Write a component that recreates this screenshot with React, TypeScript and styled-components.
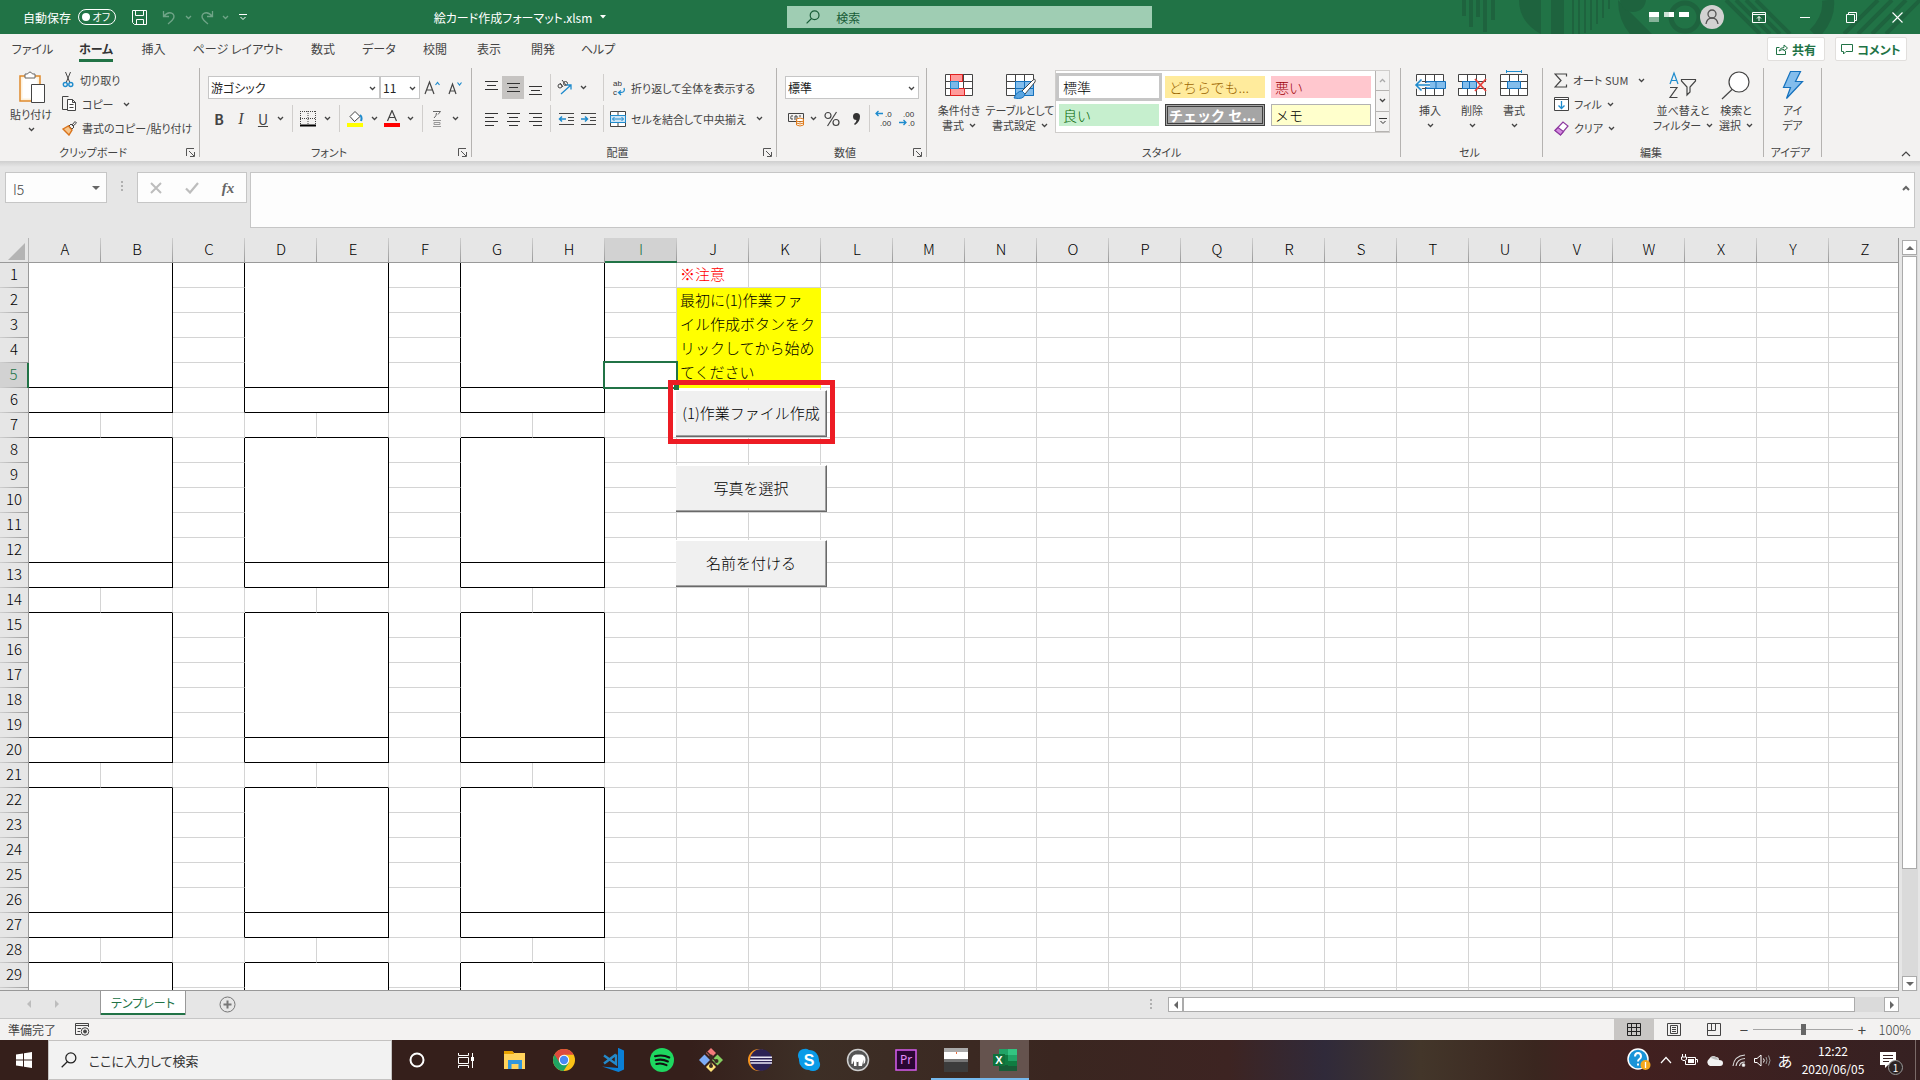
import React from "react";
import styled, { createGlobalStyle, css } from "styled-components";

const green = "#217346";
const ink = "#444444";
const line = "#d4d4d4";
const blue = "#1e8bcd";

const GlobalStyle = createGlobalStyle`
  *, *::before, *::after { box-sizing: border-box; }
  body { margin: 0; background: #e6e6e6; }
  body, button, input, select, textarea {
    font-family: "Noto Sans CJK JP", "Noto Sans", sans-serif;
    font-size: 12px;
    font-weight: 400;
    font-feature-settings: "palt";
    color: ${ink};
  }
  button { border: 0; padding: 0; background: none; }
  svg { display: block; flex: none; }
`;

const Window = styled.div`
  display: flex;
  flex-direction: column;
  height: 100vh;
  overflow: hidden;
`;

/* ---------- Title bar ---------- */

const TitleBar = styled.header`
  position: relative;
  display: grid;
  grid-template-columns: 41fr 19fr 40fr;
  align-items: center;
  height: 34px;
  flex: none;
  background: ${green};
  color: #fff;
`;

const Decoration = styled.svg`
  position: absolute;
  top: 0;
  right: 0;
`;

const QuickAccess = styled.div`
  display: flex;
  align-items: center;
  padding-left: 23px;
`;

const AutoSave = styled.button`
  display: flex;
  align-items: center;
  gap: 7px;
  width: 96px;
  color: #fff;
  white-space: nowrap;
`;

const Toggle = styled.span`
  display: flex;
  align-items: center;
  justify-content: space-between;
  width: 38px;
  height: 16px;
  padding: 0 5px 0 3px;
  border: 1px solid #fff;
  border-radius: 8px;
  font-size: 10px;
  line-height: 14px;
  &::before {
    content: "";
    width: 8px;
    height: 8px;
    border-radius: 50%;
    background: #fff;
  }
`;

const FlatButton = styled.button<{ $w: number; $dim?: boolean }>`
  display: flex;
  align-items: center;
  justify-content: center;
  gap: 8px;
  flex: none;
  width: ${(p) => p.$w}px;
  height: 24px;
  color: inherit;
  opacity: ${(p) => (p.$dim ? 0.35 : 1)};
`;

const FileName = styled.h1`
  display: flex;
  align-items: center;
  justify-content: center;
  gap: 8px;
  flex: 1;
  margin: 0;
  font-size: 12px;
  font-weight: 400;
  white-space: nowrap;
`;

const TitleSearch = styled.label`
  display: flex;
  align-items: center;
  gap: 16px;
  height: 22px;
  padding-left: 19px;
  background: #9fcdb3;
  color: #185c37;
  z-index: 1;
  input {
    flex: 1;
    min-width: 0;
    border: 0;
    padding: 0;
    background: none;
    color: #185c37;
    outline: 0;
  }
  input::placeholder { color: #185c37; opacity: 1; }
`;

const WindowTools = styled.div`
  display: flex;
  align-items: center;
  justify-content: flex-end;
  z-index: 1;
`;

const Avatar = styled.button`
  display: flex;
  align-items: center;
  justify-content: center;
  width: 24px;
  height: 24px;
  margin: 0 12px 0 10px;
  border-radius: 50%;
  background: #d2d2d2;
`;

/* ---------- Ribbon ---------- */

const TabRow = styled.nav`
  display: flex;
  align-items: stretch;
  height: 30px;
  flex: none;
  background: #f3f2f1;
`;

const Tab = styled.button<{ $w: number; $active?: boolean }>`
  display: flex;
  justify-content: center;
  width: ${(p) => p.$w}px;
  font-size: 12px;
  line-height: 30px;
  white-space: nowrap;
  ${(p) =>
    p.$active &&
    css`
      font-weight: 700;
      color: #333;
      span { border-bottom: 3px solid ${green}; height: 28px; line-height: 30px; }
    `}
`;

const ShareArea = styled.div`
  display: flex;
  gap: 10px;
  margin-left: auto;
  padding: 3px 13px 3px 0;
`;

const ShareButton = styled.button<{ $w: number }>`
  display: flex;
  align-items: center;
  justify-content: center;
  gap: 4px;
  width: ${(p) => p.$w}px;
  height: 24px;
  border: 1px solid #e1dfdd;
  border-radius: 2px;
  background: #fff;
  color: ${green};
  font-weight: 700;
  white-space: nowrap;
`;

const Ribbon = styled.div`
  display: flex;
  align-items: flex-start;
  height: 97px;
  flex: none;
  padding-top: 4px;
  background: #f3f2f1;
`;

const Group = styled.section<{ $w: number }>`
  display: flex;
  flex-direction: column;
  width: ${(p) => p.$w}px;
  height: 89px;
  flex: none;
  border-right: 1px solid #b5b3b1;
`;

const GroupBody = styled.div<{ $pad?: number }>`
  display: flex;
  height: 74px;
  flex: none;
  padding-left: ${(p) => p.$pad ?? 0}px;
`;

const GroupFoot = styled.div`
  display: flex;
  align-items: center;
  height: 20px;
  flex: none;
  padding-right: 4px;
  font-size: 11px;
  span { flex: 1; text-align: center; }
`;

const Column = styled.div<{ $top?: number; $left?: number }>`
  display: flex;
  flex-direction: column;
  padding: ${(p) => p.$top ?? 0}px 0 0 ${(p) => p.$left ?? 0}px;
`;

const Line = styled.div`
  display: flex;
  align-items: center;
  height: 31px;
  white-space: nowrap;
`;

const BigButton = styled.button<{ $w: number }>`
  display: flex;
  flex-direction: column;
  align-items: center;
  width: ${(p) => p.$w}px;
  padding-top: 2px;
  font-size: 11px;
  line-height: 15px;
  white-space: nowrap;
  svg { margin-bottom: 3px; }
  span { display: flex; align-items: center; gap: 5px; height: 15px; }
  span svg { margin: 0; }
`;

const TextButton = styled.button<{ $w?: number }>`
  display: flex;
  align-items: center;
  gap: 5px;
  width: ${(p) => (p.$w ? p.$w + "px" : "auto")};
  height: 24px;
  font-size: 11px;
  white-space: nowrap;
`;

const Icon = styled.button<{ $w: number; $on?: boolean }>`
  display: flex;
  align-items: center;
  justify-content: center;
  width: ${(p) => p.$w}px;
  height: 23px;
  background: ${(p) => (p.$on ? "#c6c4c2" : "none")};
  font-size: 14px;
  b { font-weight: 700; }
  i { font-family: "Liberation Serif", serif; font-size: 16px; }
`;

const Spacer = styled.span<{ $w: number }>`
  width: ${(p) => p.$w}px;
`;

const Rule = styled.span`
  width: 1px;
  height: 27px;
  background: #d0cecc;
`;

const SelectBox = styled.span<{ $w: number }>`
  position: relative;
  display: block;
  width: ${(p) => p.$w}px;
  height: 23px;
  select {
    appearance: none;
    width: 100%;
    height: 23px;
    padding: 0 16px 0 2px;
    border: 1px solid #c6c6c6;
    border-radius: 0;
    background: #fff;
    color: #222;
  }
  svg { position: absolute; right: 4px; top: 10px; }
`;

const Gallery = styled.div`
  display: flex;
  width: 335px;
  height: 63px;
  border: 1px solid #cfcdcb;
  background: #fff;
`;

const Styles = styled.div`
  display: grid;
  grid-template-columns: repeat(3, 100px);
  grid-auto-rows: 22px;
  gap: 6px;
  flex: 1;
  padding: 5px 3px;
`;

const StyleCell = styled.button<{ $bg: string; $fg: string; $ring?: string; $bold?: boolean }>`
  padding: 0 4px;
  background: ${(p) => p.$bg};
  color: ${(p) => p.$fg};
  box-shadow: ${(p) => p.$ring ?? "none"};
  font-size: 14px;
  font-weight: ${(p) => (p.$bold ? 700 : 300)};
  line-height: 20px;
  text-align: left;
  white-space: nowrap;
  font-feature-settings: normal;
`;

const GallerySteps = styled.div`
  display: grid;
  grid-template-rows: repeat(3, 1fr);
  width: 14px;
  button {
    display: flex;
    align-items: center;
    justify-content: center;
    border-left: 1px solid #b5b3b1;
    border-bottom: 1px solid #b5b3b1;
    background: #f3f2f1;
  }
`;

const Collapse = styled.button`
  align-self: flex-end;
  margin: 0 9px 4px auto;
`;

/* ---------- Formula bar ---------- */

const FormulaBar = styled.div`
  display: flex;
  align-items: flex-start;
  height: 77px;
  flex: none;
  padding: 11px 5px 0;
  background: linear-gradient(#cfcfcf, #e6e6e6 6px);
`;

const NameBox = styled.label`
  display: flex;
  align-items: center;
  width: 102px;
  height: 31px;
  padding: 0 6px 0 7px;
  border: 1px solid #c6c6c6;
  background: #fdfdfd;
  input {
    flex: 1;
    min-width: 0;
    height: 29px;
    border: 0;
    padding: 2px 0 0;
    background: none;
    font-size: 14px;
    font-weight: 300;
    outline: 0;
  }
`;

const Grip = styled.i`
  width: 2px;
  height: 11px;
  margin: 9px 14px 0;
  background: repeating-linear-gradient(#b0b0b0 0 2px, transparent 2px 4px);
`;

const EntryButtons = styled.div`
  display: flex;
  align-items: center;
  width: 110px;
  height: 31px;
  margin-right: 3px;
  border: 1px solid #c6c6c6;
  background: #fdfdfd;
  button { flex: 1; display: flex; justify-content: center; }
`;

const Fx = styled.span`
  font-family: "Liberation Serif", serif;
  font-size: 15px;
  font-style: italic;
  font-weight: 700;
  line-height: 20px;
  color: #666;
`;

const FormulaInput = styled.div`
  display: flex;
  flex: 1;
  height: 56px;
  border: 1px solid #c6c6c6;
  background: #fdfdfd;
  textarea { flex: 1; border: 0; resize: none; background: none; outline: 0; }
  button { align-self: flex-start; margin: 12px 4px 0 0; }
`;

/* ---------- Sheet ---------- */

const SheetArea = styled.main`
  display: flex;
  flex: 1;
  min-height: 0;
`;

const Sheet = styled.div`
  position: relative;
  flex: 1;
  min-width: 0;
  overflow: hidden;
  border-right: 1px solid #999;
  border-bottom: 1px solid #999;
  background: #fff;
`;

const Grid = styled.table`
  table-layout: fixed;
  border-collapse: separate;
  border-spacing: 0;
  width: 1901px;
  font-size: 15px;
  font-weight: 300;
  font-feature-settings: normal;
  color: #000;
  tr { height: 25px; }
  th, td { height: 25px; padding: 0; line-height: 22px; vertical-align: top; white-space: nowrap; }
`;

const Corner = styled.th`
  border-right: 1px solid #b5b5b5;
  border-bottom: 1px solid #999;
  background: #e6e6e6;
  svg { margin: 5px 0 0 8px; }
`;

const ColHead = styled.th<{ $on: boolean }>`
  font-weight: 300;
  background: linear-gradient(#cfcfcf, #999) right / 1px 100% no-repeat ${(p) => (p.$on ? "#d2d2d2" : "#e6e6e6")};
  border-bottom: ${(p) => (p.$on ? `2px solid ${green}` : "1px solid #999")};
  color: ${(p) => (p.$on ? green : "#000")};
`;

const RowHead = styled.th<{ $on: boolean }>`
  font-weight: 300;
  background: linear-gradient(90deg, #cfcfcf, #999) bottom / 100% 1px no-repeat ${(p) => (p.$on ? "#d2d2d2" : "#e6e6e6")};
  border-right: ${(p) => (p.$on ? `2px solid ${green}` : "1px solid #999")};
  color: ${(p) => (p.$on ? green : "#000")};
`;

const Cell = styled.td<{ $right?: boolean; $bottom?: boolean }>`
  position: relative;
  border-right: 1px solid ${(p) => (p.$right ? "#000" : line)};
  border-bottom: 1px solid ${(p) => (p.$bottom ? "#000" : line)};
`;

const WarningCell = styled(Cell)`
  && { padding-left: 3px; }
  color: #f00;
`;

const NoteCell = styled.td`
  && { padding-left: 3px; line-height: 24px; }
  background: #ff0;
`;

const Selection = styled.div`
  position: absolute;
  inset: -2px;
  border: 2px solid ${green};
  z-index: 1;
  &::after {
    content: "";
    position: absolute;
    right: -3px;
    bottom: -3px;
    width: 5px;
    height: 5px;
    background: ${green};
  }
`;

const MacroButton = styled.button<{ $top: number }>`
  position: absolute;
  left: 676px;
  top: ${(p) => p.$top}px;
  width: 151px;
  height: 47px;
  padding-bottom: 3px;
  border-style: solid;
  border-width: 1px 1px 1px 0;
  border-color: #fff #696969 #696969 #fff;
  background: #f0f0f0;
  box-shadow: inset -1px -1px #a0a0a0;
  color: #000;
  font-size: 15px;
  font-weight: 300;
  font-feature-settings: normal;
  white-space: nowrap;
`;

const Highlight = styled.div`
  position: absolute;
  left: 668px;
  top: 142px;
  width: 167px;
  height: 64px;
  border: 5px solid #ed1c24;
  z-index: 2;
  pointer-events: none;
`;

const VScroll = styled.div`
  display: flex;
  flex-direction: column;
  width: 16px;
  margin: 2px 2px 0 3px;
  background: #dadada;
`;

const ScrollButton = styled.button`
  display: flex;
  align-items: center;
  justify-content: center;
  width: 15px;
  height: 15px;
  flex: none;
  border: 1px solid #ababab;
  background: #fff;
`;

const VThumb = styled.div`
  flex: 613;
  margin: 1px 1px 0 0;
  border: 1px solid #ababab;
  background: #fff;
`;

const VTrack = styled.div`
  flex: 107;
`;

/* ---------- Sheet tabs ---------- */

const SheetBar = styled.div`
  display: flex;
  align-items: flex-start;
  height: 28px;
  flex: none;
  border-bottom: 1px solid #c6c6c6;
  background: #e6e6e6;
`;

const SheetNav = styled.div`
  display: flex;
  gap: 20px;
  width: 100px;
  padding: 9px 0 0 25px;
`;

const SheetTab = styled.button`
  width: 86px;
  height: 24px;
  border: solid #999;
  border-width: 0 1px;
  box-shadow: inset 0 -2px ${green};
  background: #fff;
  color: ${green};
  font-size: 12px;
  line-height: 22px;
`;

const AddSheet = styled.button`
  margin: 5px 0 0 33px;
`;

const HScroll = styled.div`
  display: flex;
  align-items: center;
  width: 39%;
  height: 15px;
  margin: 6px 21px 0 auto;
`;

const HTrack = styled.div`
  flex: 1;
  height: 15px;
  padding-right: 29px;
  background: #dadada;
`;

const HThumb = styled.div`
  height: 15px;
  border: 1px solid #ababab;
  background: #fff;
`;

const ScrollGrip = styled(Grip)`
  margin: 0 16px 0 0;
`;

/* ---------- Status bar ---------- */

const StatusBar = styled.footer`
  display: flex;
  align-items: center;
  height: 21px;
  flex: none;
  padding-left: 8px;
  background: #f3f2f1;
`;

const StatusIcon = styled.span`
  margin-left: 19px;
`;

const ViewButtons = styled.div`
  display: flex;
  margin-left: auto;
`;

const ViewButton = styled.button<{ $on?: boolean }>`
  display: flex;
  align-items: center;
  justify-content: center;
  width: 40px;
  height: 21px;
  background: ${(p) => (p.$on ? "#c8c6c4" : "none")};
`;

const Zoom = styled.div`
  display: flex;
  align-items: center;
  gap: 4px;
  padding: 0 9px 0 5px;
  button { width: 10px; font-size: 15px; line-height: 20px; }
  span { width: 40px; text-align: right; font-size: 13px; font-weight: 300; }
  input {
    appearance: none;
    width: 100px;
    height: 11px;
    margin: 0;
    background: linear-gradient(#a6a6a6, #a6a6a6) center / 100% 1px no-repeat;
  }
  input::-webkit-slider-thumb {
    appearance: none;
    width: 5px;
    height: 11px;
    background: #666;
  }
`;

/* ---------- Taskbar ---------- */

const Taskbar = styled.footer`
  display: flex;
  align-items: stretch;
  height: 40px;
  flex: none;
  background: linear-gradient(90deg, #351f1b 36%, #3d2f26 42%, #3a2620 55%, #3d2422 64%, #302a3a 69%, #43362a 74%, #3a261f 80%, #43201f 83%, #362122 100%);
  color: #fff;
`;

const StartButton = styled.button`
  display: flex;
  align-items: center;
  justify-content: center;
  width: 48px;
`;

const TaskSearch = styled.label`
  display: flex;
  align-items: center;
  gap: 12px;
  width: 344px;
  padding-left: 12px;
  border: 1px solid #c4c2c1;
  background: #f2f2f2;
  input { flex: 1; min-width: 0; border: 0; padding: 0; background: none; font-size: 13px; outline: 0; }
  input::placeholder { color: #333; opacity: 1; }
`;

const TaskButton = styled.button<{ $state?: "open" | "active" }>`
  display: flex;
  align-items: center;
  justify-content: center;
  width: 49px;
  background: ${(p) => (p.$state === "active" ? "#65534e" : "none")};
  ${(p) =>
    p.$state &&
    css`
      box-shadow: inset 0 -2px #76b9ed;
    `}
`;

const Tray = styled.div`
  display: flex;
  align-items: center;
  margin-left: auto;
`;

const TrayItem = styled.button<{ $w: number }>`
  display: flex;
  align-items: center;
  justify-content: center;
  width: ${(p) => p.$w}px;
  height: 40px;
  color: #fff;
  font-size: 15px;
`;

const Clock = styled.time`
  width: 72px;
  font-size: 12px;
  line-height: 18px;
  text-align: center;
`;

const Notice = styled.span`
  position: relative;
  margin-right: 8px;
  b {
    position: absolute;
    left: 8px;
    top: 8px;
    width: 15px;
    height: 15px;
    border: 1px solid #999;
    border-radius: 50%;
    background: #2d2424;
    font-size: 10px;
    font-weight: 400;
    line-height: 13px;
  }
`;

const ShowDesktop = styled.button`
  width: 5px;
  height: 40px;
  border-left: 1px solid #7a6a68;
`;

/* ---------- Icons ---------- */

type SvgProps = { w: number; h: number; children: React.ReactNode; sw?: number; c?: string };
const S = ({ w, h, children, sw = 1, c = "currentColor" }: SvgProps) => (
  <svg width={w} height={h} viewBox={`0 0 ${w} ${h}`} fill="none" stroke={c} strokeWidth={sw} aria-hidden="true">
    {children}
  </svg>
);

const Glyph = ({ x, y, children }: { x: number; y: number; children: string }) => (
  <text x={x} y={y} fontSize="8" fontFamily="Liberation Sans, sans-serif" fill="#333" stroke="none">
    {children}
  </text>
);

const Chevron = ({ up = false, c = "#444" }) => (
  <S w={7} h={5} c={c} sw={1.3}>
    <path d={up ? "M1 4L3.500 1.500L6 4" : "M1 1L3.500 3.500L6 1"} />
  </S>
);

const Triangle = ({ dir, c = "#666" }: { dir: "up" | "down" | "left" | "right"; c?: string }) => {
  const d = { up: "M0 6L4 2L8 6Z", down: "M0 2L4 6L8 2Z", left: "M6 0L2 4L6 8Z", right: "M2 0L6 4L2 8Z" }[dir];
  return (
    <S w={8} h={8} c="none">
      <path d={d} fill={c} />
    </S>
  );
};

const Launcher = () => (
  <S w={9} h={9} c="#555">
    <path d="M.5 8V.5H8M3 3L8 8M8.500 4V8.500H4" />
  </S>
);

const Magnifier = ({ s = 14, c = "currentColor", sw = 1.2 }) => (
  <svg width={s} height={s} viewBox="0 0 14 14" fill="none" stroke={c} strokeWidth={sw} aria-hidden="true">
    <circle cx="8.600" cy="5.200" r="4.400" />
    <path d="M5.500 8.500L.6 13.400" />
  </svg>
);

const TextLines = ({ rows, y }: { rows: number[][]; y: number }) => (
  <S w={15} h={16} c="#333" sw={1}>
    {rows.map(([a, b], i) => (
      <path key={i} d={`M${a} ${y + i * 4}.5H${b}`} />
    ))}
  </S>
);

const TableIcon = ({ children }: { children?: React.ReactNode }) => (
  <S w={32} h={30} c="#444">
    <path d="M2.500 4.500H29.500V25.500H2.500ZM2.500 11.500H29.500M2.500 18.500H29.500M11.500 4.500V25.500M20.500 4.500V25.500" fill="#fff" />
    {children}
  </S>
);

const apps: { name: string; state?: "open" | "active"; icon: React.ReactNode }[] = [
  { name: "Cortana", icon: <S w={16} h={16} c="#fff" sw={2}><circle cx="8" cy="8" r="6.500" /></S> },
  {
    name: "タスク ビュー",
    icon: <S w={17} h={17} c="#fff"><path d="M1.500 1V3.500H11.500V1M1.500 5.500H11.500V11.500H1.500ZM1.500 16V13.500H11.500V16M15.500 1V16" /><path d="M15.500 5V9" strokeWidth="3" /></S>,
  },
  {
    name: "エクスプローラー",
    icon: <S w={24} h={22} c="none"><path d="M1 2H9L11 4H22V20H1Z" fill="#ffd35c" /><path d="M1 2H9L11 4V5H1Z" fill="#e8a200" /><path d="M5 20V11H19V20H15.500V15H8.500V20Z" fill="#2f96dc" /></S>,
  },
  {
    name: "Chrome",
    icon: <S w={24} h={24} c="none"><circle cx="12" cy="12" r="11" fill="#fbc116" /><path d="M12 12L2.500 6.500A11 11 0 0 0 11.500 23L16.800 14.800Z" fill="#1fa463" /><path d="M12 6.800H21.700A11 11 0 0 0 2.500 6.500L7.500 14.600Z" fill="#dd4b3e" /><circle cx="12" cy="12" r="5.200" fill="#fff" /><circle cx="12" cy="12" r="4.200" fill="#4a8af4" /></S>,
  },
  {
    name: "Visual Studio Code",
    icon: <S w={24} h={24} c="none"><path d="M17.500 0L23 2.500V21.500L17.500 24L1 18.500L17 20V0Z" fill="#0a7fd6" /><path d="M15 6.500V16L3 7.500M3 15.500L15 6.500" stroke="#2489ca" strokeWidth="2.400" /></S>,
  },
  {
    name: "Spotify",
    icon: <S w={24} h={24} c="none"><circle cx="12" cy="12" r="12" fill="#1ed760" /><path d="M5 8.300Q12.500 6 19.300 9.500M5.700 12.300Q12 10.500 17.900 13.500M6.300 16Q11.500 14.600 16.500 17.200" stroke="#111" strokeWidth="2" strokeLinecap="round" /></S>,
  },
  {
    name: "Git",
    icon: <S w={24} h={24} c="none"><path d="M12 0L17 5L12 10L7 5Z" fill="#f47b7b" /><path d="M5.500 6.500L11 12L5.500 17.500L0 12Z" fill="#7dacf7" /><path d="M18.500 6.500L24 12L18.500 17.500L13 12Z" fill="#84cf60" /><path d="M12 14L17 19L12 24L7 19Z" fill="#ffe27a" /><path d="M8 4L12 8V19M12 9L17.500 13.500" stroke="#3b2b23" strokeWidth="1.600" /><g fill="#3b2b23"><circle cx="12" cy="8.500" r="2" /><circle cx="12" cy="18" r="2" /><circle cx="17.500" cy="13" r="2" /></g></S>,
  },
  {
    name: "Eclipse",
    icon: <S w={24} h={24} c="none"><circle cx="11" cy="12" r="11" fill="#f7941e" /><circle cx="13" cy="12" r="11" fill="#2c2255" /><path d="M2.500 9.300H24M2 12.200H24M2.500 15.100H24" stroke="#e9e6f5" strokeWidth="1.500" /></S>,
  },
  {
    name: "Skype",
    icon: <S w={24} h={24} c="none"><path d="M7 1A6 6 0 0 1 12 2A10 10 0 0 1 22 13A6.500 6.500 0 0 1 16 23A6 6 0 0 1 12 22A10 10 0 0 1 2 11A6.500 6.500 0 0 1 7 1Z" fill="#0a9be8" /><text x="12" y="18" textAnchor="middle" fill="#fff" fontFamily="Liberation Sans, sans-serif" fontWeight="700" fontSize="16">S</text></S>,
  },
  {
    name: "pgAdmin",
    icon: <S w={24} h={24} c="none"><circle cx="12" cy="12" r="10.500" fill="#555" stroke="#cfcfcf" strokeWidth="1.500" /><path d="M5.500 16Q4.500 7.500 9.500 6.500H14Q19.500 6.500 19.500 12Q19.500 15 17.500 16V11.500L16 18H12.500V13.500Q11.500 14.500 10.500 13.500V18H8V12.500L6.500 16Z" fill="#fff" /></S>,
  },
  {
    name: "Premiere Pro",
    icon: <S w={23} h={22} c="none"><rect x="1" y="1" width="20" height="20" fill="#2a0634" stroke="#d65cf0" strokeWidth="1.500" /><text x="11" y="15" textAnchor="middle" fill="#e28cf7" fontFamily="Noto Sans, sans-serif" fontSize="12">Pr</text></S>,
  },
  {
    name: "スキャナー",
    state: "open",
    icon: <S w={24} h={24} c="none"><rect width="24" height="11" fill="#fff" /><rect width="24" height="4" fill="#aaa" /><rect x="12" y="4" width="1" height="2" fill="#f26b3a" /><rect y="11" width="24" height="3" fill="#777" /><rect y="14" width="24" height="10" fill="#3c3c3c" /></S>,
  },
  {
    name: "Excel",
    state: "active",
    icon: <S w={24} h={22} c="none"><rect x="6" y="0" width="18" height="22" fill="#185c37" /><rect x="6" y="0" width="9" height="6" fill="#21a366" /><rect x="15" y="0" width="9" height="6" fill="#33c481" /><rect x="6" y="6" width="9" height="10" fill="#107c41" /><rect x="15" y="6" width="9" height="6" fill="#21a366" /><rect x="15" y="12" width="9" height="5" fill="#107c41" /><rect x="0" y="5" width="12" height="12" fill="#10713b" /><text x="6" y="15" textAnchor="middle" fill="#fff" fontFamily="Liberation Sans, sans-serif" fontWeight="700" fontSize="11">X</text></S>,
  },
];

/* ---------- Data ---------- */

const tabs: [string, number][] = [
  ["ファイル", 65], ["ホーム", 62], ["挿入", 53], ["ページ レイアウト", 116], ["数式", 54],
  ["データ", 58], ["校閲", 54], ["表示", 54], ["開発", 54], ["ヘルプ", 56],
];

const columns = "ABCDEFGHIJKLMNOPQRSTUVWXYZ".split("");
const rowCount = 30;
const rows = Array.from({ length: rowCount }, (_, i) => i + 1);
const cardStarts = [0, 3, 6];
const cardCols = [0, 1, 3, 4, 6, 7];

/* Cards repeat every seven rows: five for the picture, one for the name, one left free. */
function renderCell(row: number, col: number) {
  const phase = (row - 1) % 7;
  if (cardCols.includes(col)) {
    if (phase === 6) return <Cell key={col} $bottom />;
    if (!cardStarts.includes(col)) return null;
    if (phase === 5) return <Cell key={col} colSpan={2} $right $bottom />;
    if (phase === 0) return <Cell key={col} colSpan={2} rowSpan={Math.min(5, rowCount - row + 1)} $right $bottom />;
    return null;
  }
  if (col === 9 && row === 1) return <WarningCell key={col}>※注意</WarningCell>;
  if (row >= 2 && row <= 5 && (col === 9 || col === 10)) {
    if (row !== 2 || col !== 9) return null;
    return (
      <NoteCell key={col} colSpan={2} rowSpan={4}>
        最初に(1)作業ファ<br />イル作成ボタンをク<br />リックしてから始め<br />てください
      </NoteCell>
    );
  }
  return (
    <Cell key={col} $right={(col === 2 || col === 5) && phase !== 6}>
      {row === 5 && col === 8 && <Selection />}
    </Cell>
  );
}

/* ---------- Sections ---------- */

const Header = () => (
  <TitleBar>
    <Decoration width="480" height="34" viewBox="0 0 480 34" fill="none" stroke="#1e633e" aria-hidden="true">
      <path d="M24 0V16M31 0V27M38 0V17M45 0V32M53 0V20" strokeWidth="4" />
      <path d="M79 0H101V34Q79 22 79 0ZM111 0H124V34H111Z" fill="#1e633e" stroke="none" />
      <path d="M133 0V34M139 0V34M145 0V33M151 0V30M157 0V24M163 0V18M169 0V9" strokeWidth="2" />
      <path d="M178 0L212 34H190Q178 20 178 0Z" fill="#1e633e" stroke="none" />
      <circle cx="193" cy="-1" r="13" fill="#1e633e" stroke="none" />
      <circle cx="245" cy="17" r="14" strokeWidth="5" />
      <path d="M286 0L320 34M296 0L330 34M306 0L340 34M316 0L350 34" strokeWidth="4" />
      <path d="M388 0Q390 18 374 34" strokeWidth="12" />
      <path d="M404 34L438 0M418 34L452 0M432 34L466 0M446 34L480 0" strokeWidth="4" />
    </Decoration>
    <QuickAccess>
      <AutoSave type="button">自動保存<Toggle>オフ</Toggle></AutoSave>
      <FlatButton type="button" $w={40} aria-label="上書き保存">
        <S w={17} h={17} c="#fff"><path d="M1.500 1.500H15.500V15.500H3.500L1.500 13.500ZM4.500 1.500V6.500H12.500V1.500M5.500 15.500V10.500H12.500V15.500" /></S>
      </FlatButton>
      <FlatButton type="button" $w={36} $dim aria-label="元に戻す">
        <S w={15} h={15} c="#fff" sw={1.3}><path d="M1.500 1V6.500H7M1.500 6.500Q6 1 10.500 3.500Q15 7.500 6 14" /></S><Chevron c="#fff" />
      </FlatButton>
      <FlatButton type="button" $w={38} $dim aria-label="やり直し">
        <S w={15} h={15} c="#fff" sw={1.3}><path d="M13.500 1V6.500H8M13.500 6.500Q9 1 4.500 3.500Q0 7.500 9 14" /></S><Chevron c="#fff" />
      </FlatButton>
      <FlatButton type="button" $w={20} aria-label="クイック アクセスのカスタマイズ">
        <S w={8} h={8} c="#fff"><path d="M0 1.500H8M1.500 4L4 6.500L6.500 4" /></S>
      </FlatButton>
      <FileName>絵カード作成フォーマット.xlsm <S w={6} h={4} c="none"><path d="M0 0H6L3 3.500Z" fill="#fff" /></S></FileName>
    </QuickAccess>
    <TitleSearch>
      <Magnifier />
      <input type="text" placeholder="検索" aria-label="検索" />
    </TitleSearch>
    <WindowTools>
      <S w={41} h={11} c="none"><path d="M0 0H10V5H0ZM20 0H25V5H20ZM30 0H40V5H30Z" fill="#fff" /><path d="M0 5H10V10H0Z" fill="#86b39a" /><path d="M15 0H20V5H15Z" fill="#cfe2d7" /></S>
      <Avatar type="button" aria-label="アカウント">
        <S w={14} h={16} c="#555" sw={1.3}><circle cx="7" cy="5" r="4" /><path d="M1 15Q2 9 7 9T13 15" /></S>
      </Avatar>
      <FlatButton type="button" $w={46} aria-label="リボンの表示オプション">
        <S w={14} h={11} c="#fff"><path d="M.5.500H13.500V10.500H.5ZM.5 2.500H13.500M7 9V4.500M5 6.500L7 4.500L9 6.500" /></S>
      </FlatButton>
      <FlatButton type="button" $w={46} aria-label="最小化"><S w={10} h={3} c="#fff"><path d="M0 1.500H10" /></S></FlatButton>
      <FlatButton type="button" $w={46} aria-label="元に戻す (縮小)">
        <S w={11} h={11} c="#fff"><path d="M.5 2.500H8.500V10.500H.5ZM2.500 2.500V.5H10.500V8.500H8.500" /></S>
      </FlatButton>
      <FlatButton type="button" $w={46} aria-label="閉じる"><S w={11} h={11} c="#fff" sw={1.1}><path d="M.5.500L10.500 10.500M10.500.500L.5 10.500" /></S></FlatButton>
    </WindowTools>
  </TitleBar>
);

const RibbonTabs = () => (
  <TabRow>
    {tabs.map(([name, w]) => (
      <Tab key={name} type="button" $w={w} $active={name === "ホーム"}><span>{name}</span></Tab>
    ))}
    <ShareArea>
      <ShareButton type="button" $w={58}>
        <S w={12} h={12} c={green}><path d="M3.500 4.500H.5V11.500H9.500V8M3 8Q4 4.500 8 4.500V2L11.500 5L8 8V6.500Q5 6.500 3 8" /></S>共有
      </ShareButton>
      <ShareButton type="button" $w={72}>
        <S w={12} h={11} c={green}><path d="M.5.500H11.500V7.500H5L2.500 10V7.500H.5Z" /></S>コメント
      </ShareButton>
    </ShareArea>
  </TabRow>
);

const RibbonPanel = () => (
  <Ribbon>
    <Group $w={200}>
      <GroupBody>
        <BigButton type="button" $w={62}>
          <S w={30} h={34} c="#e08a2c" sw={1.500}><path d="M4 6H24V31H4Z" fill="#fdf1dc" /><path d="M6.500 8.500H21.500V28.500H6.500Z" fill="#fff" stroke="none" /><path d="M9 8V4H11.500Q14 0 16.500 4H19V8Z" fill="#fff" stroke="#666" strokeWidth="1" /><path d="M15.500 14.500H28.500V32.500H15.500Z" fill="#fff" stroke="#444" strokeWidth="1" /></S>
          <span>貼り付け</span>
          <span><Chevron /></span>
        </BigButton>
        <Column>
          <TextButton type="button">
            <S w={13} h={16} c="#444"><path d="M3.500 0L8 11M8.500 0L4 11" /><g stroke={blue} strokeWidth="1.400"><circle cx="3.300" cy="12.500" r="2" /><circle cx="8.800" cy="12.500" r="2" /></g></S>切り取り
          </TextButton>
          <TextButton type="button">
            <S w={15} h={16} c="#444"><path d="M5 13.500H.5V.5H6.500" /><path d="M5.500 3.500H10.500L13.500 6.500V14.500H5.500ZM10.500 3.500V6.500H13.500M7.500 8.500H11.500M7.500 11.500H11.500" fill="#fff" /></S>コピー&nbsp;&nbsp;<Chevron />
          </TextButton>
          <TextButton type="button">
            <S w={15} h={15} c="#444"><path d="M7 5L9 3L12 6L10 8ZM10 4L13 .5L14.500 2L11 5" /><path d="M1 8L6.500 5L10 9L7 14Z" fill="#f7c58b" stroke="#d9731b" strokeWidth="1.400" /></S>書式のコピー/貼り付け
          </TextButton>
        </Column>
      </GroupBody>
      <GroupFoot><span>クリップボード</span><Launcher /></GroupFoot>
    </Group>

    <Group $w={272}>
      <GroupBody $pad={8}>
        <Column $top={4}>
          <Line>
            <SelectBox $w={172}><select aria-label="フォント"><option>游ゴシック</option></select><Chevron /></SelectBox>
            <SelectBox $w={40}><select aria-label="フォント サイズ"><option>11</option></select><Chevron /></SelectBox>
            <Icon type="button" $w={24} aria-label="フォント サイズの拡大"><S w={17} h={16} c="#444" sw={1.200}><path d="M1 14L5.500 2L10 14M2.500 10H8.500" /><path d="M11.500 5L13.500 2.500L15.500 5" stroke={blue} /></S></Icon>
            <Icon type="button" $w={22} aria-label="フォント サイズの縮小"><S w={15} h={16} c="#444" sw={1.200}><path d="M1 14L4.500 4L8 14M2.500 11H6.500" /><path d="M9.500 2.500L11.500 5L13.500 2.500" stroke={blue} /></S></Icon>
          </Line>
          <Line>
            <Icon type="button" $w={22}><b>B</b></Icon>
            <Icon type="button" $w={22}><i>I</i></Icon>
            <Icon type="button" $w={22}><u>U</u></Icon>
            <Icon type="button" $w={12} aria-label="下線の種類"><Chevron /></Icon>
            <Spacer $w={6} />
            <Rule />
            <Icon type="button" $w={30} aria-label="罫線"><S w={16} h={16} c="#444"><path d="M.5 0V14M15.500 0V14M0 .5H16M8 0V14M0 7.500H16" strokeDasharray="1 1" /><path d="M0 14.500H16" strokeWidth="2" stroke="#000" /></S></Icon>
            <Icon type="button" $w={8} aria-label="罫線の種類"><Chevron /></Icon>
            <Spacer $w={8} />
            <Rule />
            <Icon type="button" $w={30} aria-label="塗りつぶしの色"><S w={16} h={17} c="#444"><path d="M3 6.500L8 1.500L13 6.500L7.500 11.500Z" fill="#fff" /><path d="M13 5Q15.500 7 14 11" stroke={blue} strokeWidth="2" /><path d="M0 15H16" stroke="#ff0" strokeWidth="4" /></S></Icon>
            <Icon type="button" $w={8} aria-label="塗りつぶしの色の選択"><Chevron /></Icon>
            <Icon type="button" $w={28} aria-label="フォントの色"><S w={16} h={17} c="#444" sw={1.200}><path d="M3.500 11L8 .5L12.500 11M5 7.500H11" /><path d="M0 15H16" stroke="#f00" strokeWidth="4" /></S></Icon>
            <Icon type="button" $w={8} aria-label="フォントの色の選択"><Chevron /></Icon>
            <Spacer $w={8} />
            <Rule />
            <Icon type="button" $w={28} aria-label="ふりがな"><S w={10} h={17} c="#666"><path d="M1 1.500H8.500L6 4.500M4.500 3Q4.500 6 2 8" /><path d="M1 10.500H9M2 12.500H8V14.500H2ZM1 16.500H9" stroke="#999" /></S></Icon>
            <Icon type="button" $w={8} aria-label="ふりがなの設定"><Chevron /></Icon>
          </Line>
        </Column>
      </GroupBody>
      <GroupFoot><span>フォント</span><Launcher /></GroupFoot>
    </Group>

    <Group $w={305}>
      <GroupBody $pad={8}>
        <Column $top={4}>
          <Line>
            <Icon type="button" $w={22} aria-label="上揃え"><TextLines rows={[[1, 14], [3, 12], [1, 14]]} y={1} /></Icon>
            <Icon type="button" $w={22} $on aria-label="上下中央揃え"><TextLines rows={[[1, 14], [3, 12], [1, 14]]} y={3} /></Icon>
            <Icon type="button" $w={22} aria-label="下揃え"><TextLines rows={[[1, 14], [3, 12], [1, 14]]} y={6} /></Icon>
            <Spacer $w={4} />
            <Rule />
            <Icon type="button" $w={28} aria-label="方向"><S w={18} h={17} c="#444"><circle cx="4" cy="7" r="2" /><path d="M4 4L7 8M6 1L10 6" /><circle cx="9.500" cy="4.500" r="2" /><path d="M5 15L15 6M10.500 6H15V10.500" stroke={blue} strokeWidth="1.300" /></S></Icon>
            <Icon type="button" $w={8} aria-label="方向の選択"><Chevron /></Icon>
            <Spacer $w={16} />
            <Rule />
          </Line>
          <Line>
            <Icon type="button" $w={22} aria-label="左揃え"><TextLines rows={[[1, 14], [1, 10], [1, 14], [1, 10]]} y={2} /></Icon>
            <Icon type="button" $w={22} aria-label="中央揃え"><TextLines rows={[[1, 14], [3, 12], [1, 14], [3, 12]]} y={2} /></Icon>
            <Icon type="button" $w={22} aria-label="右揃え"><TextLines rows={[[1, 14], [5, 14], [1, 14], [5, 14]]} y={2} /></Icon>
            <Spacer $w={4} />
            <Rule />
            <Icon type="button" $w={30} aria-label="インデントを減らす"><S w={17} h={14} c="#444"><path d="M1 1.500H16M10 5.500H16M10 8.500H16M1 12.500H16" /><path d="M8 7H1.500M4 4.500L1.500 7L4 9.500" stroke={blue} strokeWidth="1.500" /></S></Icon>
            <Icon type="button" $w={15} aria-label="インデントを増やす"><S w={17} h={14} c="#444"><path d="M1 1.500H16M10 5.500H16M10 8.500H16M1 12.500H16" /><path d="M1 7H7.500M5 4.500L7.500 7L5 9.500" stroke={blue} strokeWidth="1.500" /></S></Icon>
            <Spacer $w={7} />
            <Rule />
          </Line>
        </Column>
        <Column $top={4}>
          <Line>
            <TextButton type="button">
              <S w={22} h={19} c="none"><Glyph x={9} y={8}>ab</Glyph><Glyph x={9} y={17}>c</Glyph><path d="M20 10Q22 15 15 14.500M17 12.500L14.500 14.500L17 17" stroke={blue} strokeWidth="1.300" /></S>折り返して全体を表示する
            </TextButton>
          </Line>
          <Line>
            <TextButton type="button">
              <S w={22} h={16} c="#444"><path d="M6.500.500H21.500V15.500H6.500ZM14 .5V4M14 12V15.500" fill="#fff" /><path d="M6.500 4.500H21.500V11.500H6.500Z" fill="#cfe6f7" stroke={blue} /><path d="M8.500 8H19.500M10.500 6L8.500 8L10.500 10M17.500 6L19.500 8L17.500 10" stroke={blue} /></S>セルを結合して中央揃え&nbsp;&nbsp;<Chevron />
            </TextButton>
          </Line>
        </Column>
      </GroupBody>
      <GroupFoot><span>配置</span><Launcher /></GroupFoot>
    </Group>

    <Group $w={150}>
      <GroupBody $pad={8}>
        <Column $top={4}>
          <Line><SelectBox $w={134}><select aria-label="表示形式"><option>標準</option></select><Chevron /></SelectBox></Line>
          <Line>
            <Icon type="button" $w={22} aria-label="通貨表示形式"><S w={17} h={16} c="#444"><path d="M.5 2.500H15.500V10.500H.5ZM5 5Q2 4 3 8H5M7 9V5H9V9M11 5H13" /><path d="M8.500 8Q12 6 15.500 8V14Q12 16 8.500 14ZM8.500 10Q12 12 15.500 10M8.500 12Q12 14 15.500 12" fill="#fff" stroke="#e07b1a" /></S></Icon>
            <Icon type="button" $w={12} aria-label="通貨の選択"><Chevron /></Icon>
            <Icon type="button" $w={26} aria-label="パーセント スタイル"><S w={16} h={16} c="#444" sw={1.200}><circle cx="4" cy="4.500" r="3" /><circle cx="12" cy="11.500" r="3" /><path d="M12.500 1L3.500 15" /></S></Icon>
            <Icon type="button" $w={22} aria-label="桁区切りスタイル"><S w={9} h={14} c="none"><path d="M1 4.500A3.500 3.500 0 1 1 8 4.500Q8 10 3 13L2 12Q4.500 10 4.500 8A3.500 3.500 0 0 1 1 4.500Z" fill="#333" /></S></Icon>
            <Spacer $w={2} />
            <Rule />
            <Icon type="button" $w={28} aria-label="小数点以下の表示桁数を増やす"><S w={18} h={19} c="none"><Glyph x={10} y={8}>.0</Glyph><Glyph x={5} y={17}>.00</Glyph><path d="M8 4.500H1M3.500 2L1 4.500L3.500 7" stroke={blue} strokeWidth="1.300" /></S></Icon>
            <Icon type="button" $w={18} aria-label="小数点以下の表示桁数を減らす"><S w={18} h={19} c="none"><Glyph x={5} y={8}>.00</Glyph><Glyph x={10} y={17}>.0</Glyph><path d="M1 13.500H8M5.500 11L8 13.500L5.500 16" stroke={blue} strokeWidth="1.300" /></S></Icon>
          </Line>
        </Column>
      </GroupBody>
      <GroupFoot><span>数値</span><Launcher /></GroupFoot>
    </Group>

    <Group $w={474}>
      <GroupBody $pad={2}>
        <BigButton type="button" $w={60}>
          <TableIcon><path d="M7.500 4.500H19.500V11.500H7.500ZM7.500 18.500H21.500V25.500H7.500Z" fill="#ff9a9a" stroke="#e02020" /><path d="M7.500 11.500H15.500V18.500H7.500Z" fill="#7db8e8" stroke={blue} /></TableIcon>
          <span>条件付き</span><span>書式 <Chevron /></span>
        </BigButton>
        <BigButton type="button" $w={62}>
          <TableIcon><path d="M11.500 11.500H29.500V25.500H11.500Z" fill="#83bdec" stroke="#1471bd" /><path d="M11.500 18.500H29.500M20.500 11.500V25.500" stroke="#1471bd" /><path d="M18 21L29 10Q32 8 31 12L21 24Z" fill="#fff" /><path d="M18 21Q13 21 10 28Q20 30 21 24Z" fill="#5aa5e0" stroke="#1471bd" /></TableIcon>
          <span>テーブルとして</span><span>書式設定 <Chevron /></span>
        </BigButton>
        <Column $top={2} $left={4}>
          <Gallery>
            <Styles>
              <StyleCell type="button" $bg="#fff" $fg="#000" $ring="0 0 0 3px #c6c6c6">標準</StyleCell>
              <StyleCell type="button" $bg="#ffeb9c" $fg="#9c6500">どちらでも...</StyleCell>
              <StyleCell type="button" $bg="#ffc7ce" $fg="#9c0006">悪い</StyleCell>
              <StyleCell type="button" $bg="#c6efce" $fg="#006100">良い</StyleCell>
              <StyleCell type="button" $bg="#a5a5a5" $fg="#fff" $bold $ring="inset 0 0 0 1px #3f3f3f, inset 0 0 0 2px #a5a5a5, inset 0 0 0 3px #3f3f3f">チェック セ...</StyleCell>
              <StyleCell type="button" $bg="#ffffcc" $fg="#000" $ring="inset 0 0 0 1px #b2b2b2">メモ</StyleCell>
            </Styles>
            <GallerySteps>
              <button type="button" aria-label="前のスタイル"><Chevron up c="#aaa" /></button>
              <button type="button" aria-label="次のスタイル"><Chevron /></button>
              <button type="button" aria-label="その他のスタイル"><S w={8} h={8} c="#333"><path d="M0 1.500H8M1.500 4L4 6.500L6.500 4" /></S></button>
            </GallerySteps>
          </Gallery>
        </Column>
      </GroupBody>
      <GroupFoot><span>スタイル</span></GroupFoot>
    </Group>

    <Group $w={142}>
      <GroupBody $pad={8}>
        <BigButton type="button" $w={42}>
          <TableIcon><path d="M12 11.500H31.500V18.500H12Z" fill="#83bdec" stroke="#1471bd" /><path d="M22 11.500V18.500" stroke="#1471bd" /><path d="M16 15H1M7 9.500L1.500 15L7 20.500" stroke="#f3f2f1" strokeWidth="4" /><path d="M16 15H2M7.500 9.500L2 15L7.500 20.500" stroke={blue} strokeWidth="1.600" /></TableIcon>
          <span>挿入</span><span><Chevron /></span>
        </BigButton>
        <BigButton type="button" $w={42}>
          <TableIcon><path d="M1 12H6V18H1ZM21 12H31V18H21Z" fill="#f3f2f1" stroke="none" /><path d="M6.500 11.500H20.500V18.500H6.500ZM13.500 11.500V18.500" fill="#83bdec" stroke="#1471bd" /><path d="M19 9L30 21M30 9L19 21" stroke="#e8413c" strokeWidth="1.800" /></TableIcon>
          <span>削除</span><span><Chevron /></span>
        </BigButton>
        <BigButton type="button" $w={42}>
          <TableIcon><path d="M9.500 11.500H22.500V18.500H9.500Z" fill="#83bdec" stroke="#1471bd" /><path d="M8.500 0V3M23.500 0V3M8.500 1.500H23.500" stroke={blue} /></TableIcon>
          <span>書式</span><span><Chevron /></span>
        </BigButton>
      </GroupBody>
      <GroupFoot><span>セル</span></GroupFoot>
    </Group>

    <Group $w={221}>
      <GroupBody $pad={11}>
        <Column>
          <TextButton type="button" $w={102}><S w={14} h={15} c="#444" sw={1.200}><path d="M12.500 3.500V1H1L7 7.500L1 14H12.500V11.500" /></S>オート SUM&nbsp;&nbsp;<Chevron /></TextButton>
          <TextButton type="button" $w={102}><S w={15} h={14} c="#444"><path d="M.5.500H14.500V13.500H.5ZM.5 2.500H14.500" fill="#fff" /><path d="M7.500 4V11.500M4.500 8.500L7.500 11.500L10.500 8.500" stroke={blue} strokeWidth="1.300" /></S>フィル<Chevron /></TextButton>
          <TextButton type="button" $w={102}><S w={15} h={15} c="#8e3aa0" sw={1.200}><path d="M1 9.500L9 1L14 5L6.500 14Z" fill="#fff" /><path d="M1 9.500L4 6.500L9.500 10.500L6.500 14Z" fill="#d58be0" /></S>クリア<Chevron /></TextButton>
        </Column>
        <BigButton type="button" $w={54}>
          <S w={32} h={30} c="#444" sw={1.200}><path d="M3 14L7 3L11 14M4.500 10.500H9.500" stroke={blue} /><path d="M3 17.500H10L3 27.500H10.500M14.500 9.500H28.500V11L23 17V22L20 25V17L14.500 11Z" /></S>
          <span>並べ替えと</span><span>フィルター <Chevron /></span>
        </BigButton>
        <BigButton type="button" $w={52}>
          <S w={32} h={30} c="#444" sw={1.200}><circle cx="19" cy="12" r="10" fill="#fff" /><path d="M12 19.500L2 29" /></S>
          <span>検索と</span><span>選択 <Chevron /></span>
        </BigButton>
      </GroupBody>
      <GroupFoot><span>編集</span></GroupFoot>
    </Group>

    <Group $w={58}>
      <GroupBody>
        <BigButton type="button" $w={58}>
          <S w={24} h={30} c="#1471bd" sw={1.200}><path d="M9.500 1.500H19.500L14.500 11.500H21.500L5.500 28.500L9.500 17.500H2.500Z" fill="#83bdec" /></S>
          <span>アイ</span><span>デア</span>
        </BigButton>
      </GroupBody>
      <GroupFoot><span>アイデア</span></GroupFoot>
    </Group>
    <Collapse type="button" aria-label="リボンを折りたたむ"><S w={10} h={6} c="#444" sw={1.200}><path d="M1 5L5 1L9 5" /></S></Collapse>
  </Ribbon>
);

const Formula = () => (
  <FormulaBar>
    <NameBox><input type="text" defaultValue="I5" aria-label="名前ボックス" /><Triangle dir="down" /></NameBox>
    <Grip />
    <EntryButtons>
      <button type="button" aria-label="キャンセル"><S w={12} h={12} c="#bdbdbd" sw={2}><path d="M1 1L11 11M11 1L1 11" /></S></button>
      <button type="button" aria-label="入力"><S w={14} h={12} c="#bdbdbd" sw={2.200}><path d="M1 6.500L5 10.500L13 1" /></S></button>
      <button type="button" aria-label="関数の挿入"><Fx>fx</Fx></button>
    </EntryButtons>
    <FormulaInput>
      <textarea aria-label="数式バー" />
      <button type="button" aria-label="数式バーの折りたたみ"><S w={8} h={6} c="#666" sw={2}><path d="M1 5L4 2L7 5" /></S></button>
    </FormulaInput>
  </FormulaBar>
);

const Worksheet = () => (
  <SheetArea>
    <Sheet>
      <Grid>
        <colgroup>
          <col style={{ width: 29 }} />
          {columns.map((c) => <col key={c} style={{ width: 72 }} />)}
        </colgroup>
        <thead>
          <tr>
            <Corner aria-label="すべて選択"><S w={17} h={17} c="none"><path d="M17 0V17H0Z" fill="#b4b4b4" /></S></Corner>
            {columns.map((c) => <ColHead key={c} scope="col" $on={c === "I"}>{c}</ColHead>)}
          </tr>
        </thead>
        <tbody>
          {rows.map((r) => (
            <tr key={r}>
              <RowHead scope="row" $on={r === 5}>{r < rowCount ? r : ""}</RowHead>
              {columns.map((_, c) => renderCell(r, c))}
            </tr>
          ))}
        </tbody>
      </Grid>
      <MacroButton type="button" $top={152}>(1)作業ファイル作成</MacroButton>
      <MacroButton type="button" $top={227}>写真を選択</MacroButton>
      <MacroButton type="button" $top={302}>名前を付ける</MacroButton>
      <Highlight />
    </Sheet>
    <VScroll>
      <ScrollButton type="button" aria-label="上へ"><Triangle dir="up" /></ScrollButton>
      <VThumb />
      <VTrack />
      <ScrollButton type="button" aria-label="下へ"><Triangle dir="down" /></ScrollButton>
    </VScroll>
  </SheetArea>
);

const Bottom = () => (
  <>
    <SheetBar>
      <SheetNav><Triangle dir="left" c="#bdbdbd" /><Triangle dir="right" c="#bdbdbd" /></SheetNav>
      <SheetTab type="button">テンプレート</SheetTab>
      <AddSheet type="button" aria-label="新しいシート">
        <S w={17} h={17} c="#777"><circle cx="8.500" cy="8.500" r="7.500" /><path d="M8.500 4.500V12.500M4.500 8.500H12.500" strokeWidth="2" /></S>
      </AddSheet>
      <HScroll>
        <ScrollGrip />
        <ScrollButton type="button" aria-label="左へ"><Triangle dir="left" /></ScrollButton>
        <HTrack><HThumb /></HTrack>
        <ScrollButton type="button" aria-label="右へ"><Triangle dir="right" /></ScrollButton>
      </HScroll>
    </SheetBar>
    <StatusBar>
      準備完了
      <StatusIcon><S w={15} h={13} c="#444"><path d="M6 11.500H.5V.5H13.500V4M.5 2.500H13.500M2.500 5.500H6M2.500 8.500H5" /><circle cx="10" cy="8.500" r="3.800" /><circle cx="10" cy="8.500" r="1.500" fill="#444" /></S></StatusIcon>
      <ViewButtons>
        <ViewButton type="button" $on aria-label="標準"><S w={14} h={13} c="#222"><path d="M.5.500H13.500V12.500H.5ZM.5 4.500H13.500M.5 8.500H13.500M4.500.500V12.500M9.500.500V12.500" /></S></ViewButton>
        <ViewButton type="button" aria-label="ページ レイアウト"><S w={14} h={13} c="#444"><path d="M.5.500H13.500V12.500H.5ZM3.500 2.500H10.500V10.500H3.500ZM5 4.500H9M5 6.500H9M5 8.500H9" /></S></ViewButton>
        <ViewButton type="button" aria-label="改ページ プレビュー"><S w={14} h={13} c="#444"><path d="M.5.500H13.500V12.500H.5ZM.5 7.500H8.500V.5M4.500.500V7.500" /></S></ViewButton>
      </ViewButtons>
      <Zoom>
        <button type="button" aria-label="縮小">−</button>
        <input type="range" min="0" max="100" defaultValue="50" aria-label="ズーム" />
        <button type="button" aria-label="拡大">+</button>
        <span>100%</span>
      </Zoom>
    </StatusBar>
    <Taskbar>
      <StartButton type="button" aria-label="スタート"><S w={16} h={16} c="none"><path d="M0 2.500L7 1.500V7.500H0ZM8 1.300L16 0V7.500H8ZM0 8.500H7V14.500L0 13.500ZM8 8.500H16V16L8 14.700Z" fill="#fff" /></S></StartButton>
      <TaskSearch><Magnifier s={16} c="#222" sw={1.100} /><input type="text" placeholder="ここに入力して検索" aria-label="ここに入力して検索" /></TaskSearch>
      {apps.map((a) => <TaskButton key={a.name} type="button" $state={a.state} aria-label={a.name}>{a.icon}</TaskButton>)}
      <Tray>
        <TrayItem type="button" $w={32} aria-label="ヘルプ"><S w={24} h={24} c="none"><circle cx="11" cy="11" r="10" fill="#1a94d8" stroke="#fff" strokeWidth="1.500" /><path d="M8 8.500Q8 5 11 5T14 8.500Q14 10 12.500 11T11 13.500M11 15.500V17.500" stroke="#fff" strokeWidth="2" /><circle cx="18.500" cy="17" r="5" fill="#f5a81c" /><path d="M18.500 14V20" stroke="#fff" strokeWidth="1.300" /></S></TrayItem>
        <TrayItem type="button" $w={22} aria-label="隠れているインジケーター"><S w={12} h={8} c="#fff" sw={1.200}><path d="M1 7L6 1.500L11 7" /></S></TrayItem>
        <TrayItem type="button" $w={24} aria-label="バッテリー"><S w={17} h={13} c="#fff"><path d="M6.500 3.500H14.500V10.500H4.500V7M14.500 5.500H16.500V8.500M.5 3V5.500Q3 8 5.500 5.500V3ZM1.500 0V3M4.500 0V3" /><path d="M7 5H13V9H7Z" fill="#fff" stroke="none" /></S></TrayItem>
        <TrayItem type="button" $w={26} aria-label="OneDrive"><S w={17} h={11} c="none"><path d="M4 11A4 4 0 0 1 3 4Q6-1 10 2Q13 2 13 5Q17 5 17 8T14 11Z" fill="#f2f2f2" /><path d="M5 3Q9 5 13 5L10 2Q6 0 5 3Z" fill="#bbb" /></S></TrayItem>
        <TrayItem type="button" $w={24} aria-label="Wi-Fi"><S w={14} h={13} c="#ddd" sw={1.100}><path d="M1 12Q2 2 13 1M4 12Q5 5 13 4.500M7.500 12Q8 8 13 8" /><circle cx="11.500" cy="11" r="1.300" fill="#fff" /></S></TrayItem>
        <TrayItem type="button" $w={22} aria-label="音量"><S w={17} h={13} c="#fff"><path d="M.5 4.500H3L7 1V12L3 8.500H.5ZM9.500 4.500Q11 6.500 9.500 8.500" /><path d="M12 3Q14 6.500 12 10M14.500 1.500Q17.500 6.500 14.500 11.500" stroke="#999" /></S></TrayItem>
        <TrayItem type="button" $w={24}>あ</TrayItem>
        <Clock>12:22<br />2020/06/05</Clock>
        <TrayItem type="button" $w={46} aria-label="通知">
          <Notice><S w={16} h={17} c="none"><path d="M0 0H16V13H8L5 16V13H0Z" fill="#fff" /><path d="M3 3.500H13M3 6.500H13M3 9.500H9" stroke="#382223" /></S><b>1</b></Notice>
        </TrayItem>
        <ShowDesktop type="button" aria-label="デスクトップの表示" />
      </Tray>
    </Taskbar>
  </>
);

export default function App() {
  return (
    <Window>
      <GlobalStyle />
      <Header />
      <RibbonTabs />
      <RibbonPanel />
      <Formula />
      <Worksheet />
      <Bottom />
    </Window>
  );
}
